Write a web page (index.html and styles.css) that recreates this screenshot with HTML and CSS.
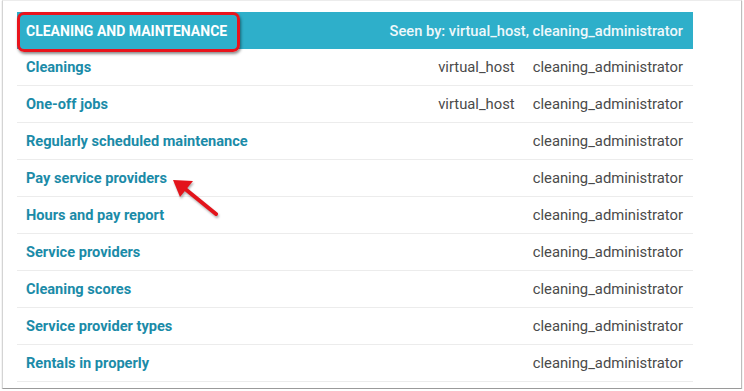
FILE: index.html
```html
<!DOCTYPE html>
<html lang="en">

<head>
    <meta charset="UTF-8">
    <meta name="viewport" content="width=device-width, initial-scale=1.0">
    <link rel="stylesheet" href="styles.css">
    <title>Cleaning and maintenance</title>
</head>

<body>
    <div class="frame">
        <div class="section">
            <div class="sectionhead">
                <span class="sectiontitle">CLEANING AND MAINTENANCE</span>
                <span class="seenby">Seen by: virtual_host, cleaning_administrator</span>
            </div>
            <div class="row">
                <a class="name">Cleanings</a>
                <span class="role">virtual_host</span>
                <span class="role">cleaning_administrator</span>
            </div>
            <div class="row">
                <a class="name">One-off jobs</a>
                <span class="role">virtual_host</span>
                <span class="role">cleaning_administrator</span>
            </div>
            <div class="row">
                <a class="name">Regularly scheduled maintenance</a>
                <span class="role"></span>
                <span class="role">cleaning_administrator</span>
            </div>
            <div class="row arrowrow">
                <a class="name">Pay service providers</a>
                <span class="role"></span>
                <span class="role">cleaning_administrator</span>
                <svg class="arrow" width="60" height="50" viewBox="0 0 60 50">
                    <line x1="50" y1="42" x2="18" y2="16" stroke="#e3141b" stroke-width="4" stroke-linecap="round" />
                    <polygon points="7,8 27,9 14,25" fill="#e3141b" />
                </svg>
            </div>
            <div class="row">
                <a class="name">Hours and pay report</a>
                <span class="role"></span>
                <span class="role">cleaning_administrator</span>
            </div>
            <div class="row">
                <a class="name">Service providers</a>
                <span class="role"></span>
                <span class="role">cleaning_administrator</span>
            </div>
            <div class="row">
                <a class="name">Cleaning scores</a>
                <span class="role"></span>
                <span class="role">cleaning_administrator</span>
            </div>
            <div class="row">
                <a class="name">Service provider types</a>
                <span class="role"></span>
                <span class="role">cleaning_administrator</span>
            </div>
            <div class="row">
                <a class="name">Rentals in properly</a>
                <span class="role"></span>
                <span class="role">cleaning_administrator</span>
            </div>
        </div>
    </div>
</body>

</html>
```

FILE: styles.css
```css
* {
    padding: 0;
    margin: 0;
    box-sizing: border-box;
}

body {
    background-color: white;
    font-family: Roboto, "Liberation Sans", sans-serif;
    overflow: hidden;
}

.frame {
    margin-left: 2px;
    width: 740px;
    height: 389px;
    border: 1px solid #d4d4d4;
    border-top-color: #ececec;
    border-bottom-color: #9a9a9a;
    border-right-color: #bdbdbd;
    box-shadow: 0 1px 1px rgba(0, 0, 0, 0.25);
    padding: 11px 0 0 14px;
    overflow: hidden;
}

.section {
    width: 676px;
}

.sectionhead {
    display: flex;
    justify-content: space-between;
    align-items: center;
    height: 37px;
    background-color: #2eafca;
    color: white;
    padding: 0 10px 0 9px;
}

.sectiontitle {
    position: relative;
    font-weight: bold;
    font-size: 14px;
}

.sectiontitle::before {
    content: "";
    position: absolute;
    left: -9px;
    right: -13px;
    top: -11px;
    bottom: -13px;
    border: 3px solid #e9141c;
    border-radius: 7px;
    box-shadow: 1px 2px 3px rgba(0, 0, 0, 0.45);
}

.seenby {
    font-weight: 500;
    font-size: 14.7px;
    color: #eef8fb;
}

.row {
    display: grid;
    grid-template-columns: 1fr auto auto;
    column-gap: 18px;
    align-items: center;
    height: 37px;
    padding: 0 10px 0 9px;
    border-bottom: 1px solid #ececec;
    font-size: 14.8px;
}

.name {
    color: #1b8ba8;
    font-weight: bold;
    font-size: 14.6px;
}

.role {
    color: #4a4a4a;
    text-align: right;
}

.arrowrow {
    position: relative;
}

.arrow {
    position: absolute;
    left: 149px;
    top: 12px;
    filter: drop-shadow(1px 2px 1px rgba(0, 0, 0, 0.3));
}
```
